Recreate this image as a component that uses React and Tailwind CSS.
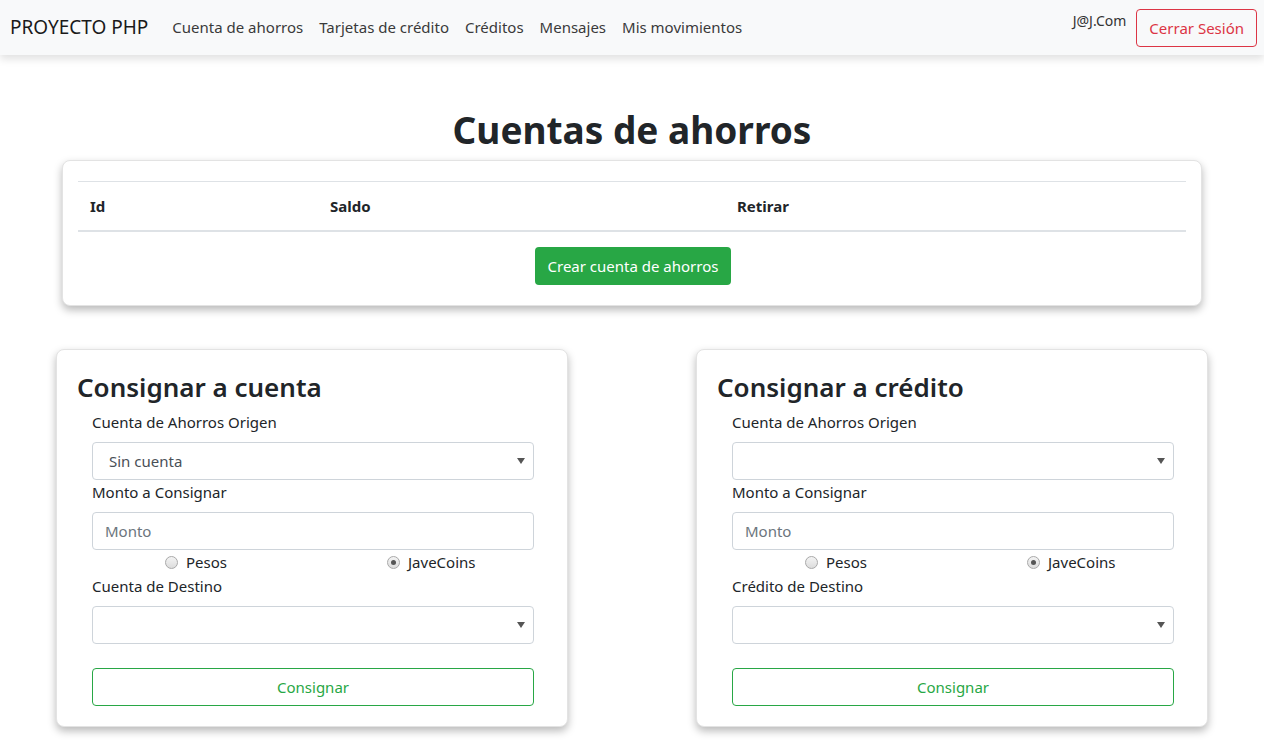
import React from 'react';

const font = { fontFamily: '"Noto Sans", "Open Sans", sans-serif' };

function Radio({ checked, label }) {
  return (
    <label className="flex items-center gap-[8px] text-[15px] leading-[24px] text-[#212529]">
      <span className="w-[13px] h-[13px] rounded-full border border-[#a9a9a9] bg-gradient-to-b from-[#f4f4f4] to-[#dcdcdc] flex items-center justify-center">
        {checked && <span className="w-[5px] h-[5px] rounded-full bg-[#555]" />}
      </span>
      {label}
    </label>
  );
}

function Select({ value }) {
  return (
    <div className="h-[38px] border border-[#ced4da] rounded-[4px] bg-white flex items-center justify-between pl-[16px] pr-[8px] text-[15px] text-[#495057]">
      <span>{value}</span>
      <svg width="8" height="6" viewBox="0 0 8 6"><path d="M0 0h8L4 6z" fill="#555" /></svg>
    </div>
  );
}

function FormCard({ title, destLabel, origin }) {
  return (
    <div className="w-[512px] bg-white border border-[#e3e3e3] rounded-[8px] shadow-[0_4px_8px_rgba(0,0,0,0.28)] pt-[20px] pb-[20px] pl-[19px] pr-[33px]">
      <h2 className="text-[26px] leading-[34px] font-semibold text-[#212529] pl-[1px]">{title}</h2>
      <div className="pl-[16px] mt-[6px]">
        <div className="text-[15px] leading-[24px] text-[#212529]">Cuenta de Ahorros Origen</div>
        <div className="mt-[8px]"><Select value={origin} /></div>
        <div className="text-[15px] leading-[24px] text-[#212529]">Monto a Consignar</div>
        <div className="mt-[8px] h-[38px] border border-[#ced4da] rounded-[4px] flex items-center px-[12px] text-[15px] text-[#6c757d]">Monto</div>
        <div className="flex">
          <div className="ml-[73px] w-[222px]"><Radio label="Pesos" /></div>
          <div><Radio label="JaveCoins" checked /></div>
        </div>
        <div className="text-[15px] leading-[24px] text-[#212529]">{destLabel}</div>
        <div className="mt-[8px]"><Select value="" /></div>
        <button className="mt-[24px] w-full h-[38px] border border-[#28a745] rounded-[4px] text-[#28a745] text-[15px]">Consignar</button>
      </div>
    </div>
  );
}

export default function App() {
  return (
    <div className="min-h-screen bg-white text-[#212529]" style={font}>
      {/* Navbar */}
      <nav className="h-[55px] bg-[#f8f9fa] shadow-[0_4px_8px_rgba(0,0,0,0.12)] flex items-center pl-[10px] pr-[7px]">
        <span className="text-[19px] text-[#1a1a1a] mr-[16px]">PROYECTO PHP</span>
        <div className="flex items-center text-[15px] text-[#3a3a3a]">
          {['Cuenta de ahorros', 'Tarjetas de crédito', 'Créditos', 'Mensajes', 'Mis movimientos'].map(l => (
            <a key={l} className="px-[8px]">{l}</a>
          ))}
        </div>
        <div className="ml-auto flex items-start h-full pt-[9px]">
          <span className="text-[14px] text-[#333] mt-[1px] mr-[10px]">J@J.Com</span>
          <button className="h-[38px] px-[12px] border border-[#dc3545] rounded-[4px] text-[#dc3545] text-[15px]">Cerrar Sesión</button>
        </div>
      </nav>

      <h1 className="text-center text-[37px] leading-[48px] font-bold mt-[51px]">Cuentas de ahorros</h1>

      <div className="w-[1140px] mx-auto mt-[6px] bg-white border border-[#e3e3e3] rounded-[8px] shadow-[0_4px_8px_rgba(0,0,0,0.28)] px-[15px] pt-[20px] pb-[20px]">
        <div className="border-t border-[#dee2e6] border-b-2 border-b-[#dee2e6] flex h-[51px] items-center text-[15px] font-bold">
          <div className="w-[240px] px-[12px]">Id</div>
          <div className="w-[407px] px-[12px]">Saldo</div>
          <div className="flex-1 px-[12px]">Retirar</div>
        </div>
        <div className="flex justify-center mt-[15px] pl-[2px]">
          <button className="h-[38px] px-[13px] bg-[#28a745] text-white rounded-[4px] text-[15px]">Crear cuenta de ahorros</button>
        </div>
      </div>

      <div className="w-[1152px] mx-auto mt-[43px] flex justify-between pb-[20px]">
        <FormCard title="Consignar a cuenta" destLabel="Cuenta de Destino" origin="Sin cuenta" />
        <FormCard title="Consignar a crédito" destLabel="Crédito de Destino" origin="" />
      </div>
    </div>
  );
}
